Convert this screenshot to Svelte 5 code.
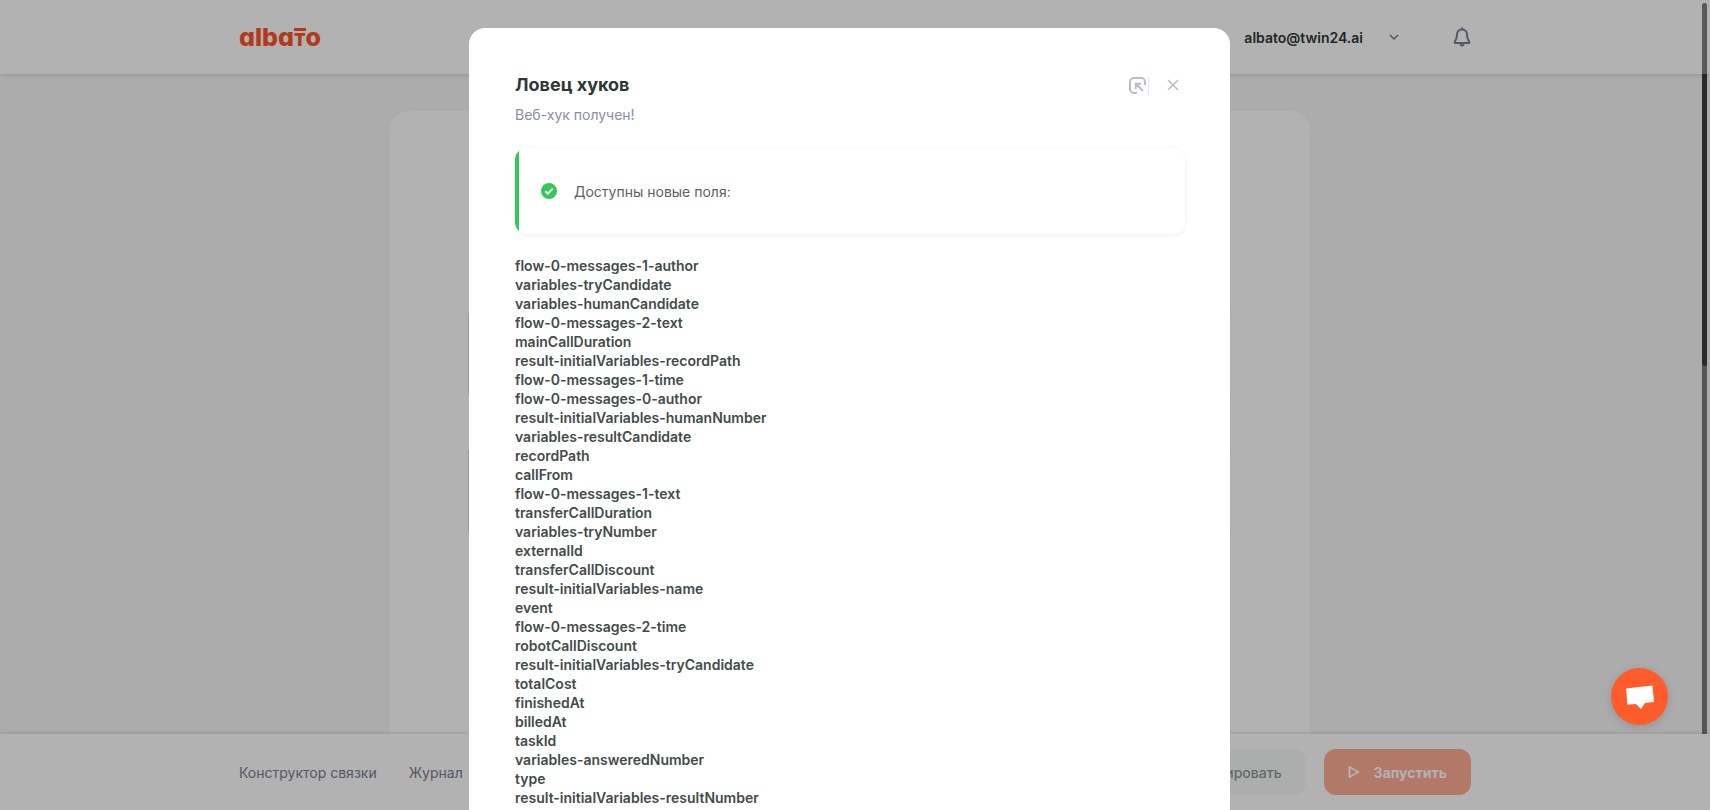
<script>
	let fields = [
		'flow-0-messages-1-author',
		'variables-tryCandidate',
		'variables-humanCandidate',
		'flow-0-messages-2-text',
		'mainCallDuration',
		'result-initialVariables-recordPath',
		'flow-0-messages-1-time',
		'flow-0-messages-0-author',
		'result-initialVariables-humanNumber',
		'variables-resultCandidate',
		'recordPath',
		'callFrom',
		'flow-0-messages-1-text',
		'transferCallDuration',
		'variables-tryNumber',
		'externalId',
		'transferCallDiscount',
		'result-initialVariables-name',
		'event',
		'flow-0-messages-2-time',
		'robotCallDiscount',
		'result-initialVariables-tryCandidate',
		'totalCost',
		'finishedAt',
		'billedAt',
		'taskId',
		'variables-answeredNumber',
		'type',
		'result-initialVariables-resultNumber'
	];
</script>

<div class="page">
	<header class="header">
		<div class="container">
			<a class="logo" href="/" aria-label="albato">alba<span class="logo-t">T</span>o</a>
			<div class="account">
				<button class="user">
					albato@twin24.ai
					<svg width="10" height="6" viewBox="0 0 10 6"><path d="M1 1l4 4 4-4" /></svg>
				</button>
				<button class="bell" aria-label="Уведомления">
					<svg width="18" height="20" viewBox="0 0 18 20">
						<path d="M9 2.5C5.8 2.5 4 4.8 4 7.6c0 4.2-1 5.2-2 6.6-.7 1-.4 1.9.8 1.9h12.4c1.2 0 1.5-.9.8-1.9-1-1.4-2-2.4-2-6.6 0-2.8-1.8-5.1-5-5.1z" />
						<path d="M8 1.5h2M7 17.5q2 2 4 0" />
					</svg>
				</button>
			</div>
		</div>
	</header>

	<main class="main">
		<div class="card">
			<div class="step"></div>
			<div class="step"></div>
		</div>
	</main>

	<footer class="footer">
		<div class="container">
			<nav class="links">
				<a href="#builder">Конструктор связки</a>
				<a href="#log">Журнал</a>
			</nav>
			<div class="actions">
				<button class="btn btn-secondary">Редактировать</button>
				<button class="btn btn-primary">
					<svg width="12" height="14" viewBox="0 0 12 14"><path d="M1.5 2v10L10.5 7z" /></svg>
					Запустить
				</button>
			</div>
		</div>
	</footer>
</div>

<div class="page-thumb"></div>

<div class="overlay">
	<div class="modal" role="dialog" aria-labelledby="modal-title">
		<div class="modal-header">
			<h2 id="modal-title">Ловец хуков</h2>
			<div class="modal-tools">
				<button class="expand" aria-label="Развернуть">
					<svg width="17" height="17" viewBox="0 0 17 17">
						<path d="M8 16H5a4 4 0 0 1-4-4V5a4 4 0 0 1 4-4h7a4 4 0 0 1 4 4v3" />
						<path d="M14 14L7 7M6.8 12V6.8H12" />
					</svg>
				</button>
				<button class="close" aria-label="Закрыть">
					<svg width="12" height="12" viewBox="0 0 12 12"><path d="M1 1l10 10M11 1L1 11" /></svg>
				</button>
			</div>
		</div>
		<p class="subtitle">Веб-хук получен!</p>

		<div class="alert">
			<svg width="16" height="16" viewBox="0 0 16 16">
				<circle cx="8" cy="8" r="8" />
				<path d="M4.3 8.2l2.5 2.4 4.9-5" />
			</svg>
			<span>Доступны новые поля:</span>
		</div>

		<ul class="fields">
			{#each fields as field}
				<li>{field}</li>
			{/each}
		</ul>
	</div>
</div>

<div class="modal-thumb"></div>

<button class="chat" aria-label="Чат">
	<svg width="28" height="24" viewBox="0 0 28 24">
		<path d="M0 3.5L26.5.5 28 17l-9 1-4 6-5-5-8.500.700z" />
	</svg>
</button>

<style>
	:global(body) {
		background: #f6f6f6;
		font-family: Inter, 'Liberation Sans', sans-serif;
		font-size: 14px;
		color: #2d3835;
		overflow: hidden;
	}

	button {
		font: inherit;
		color: inherit;
		background: none;
		border: none;
		padding: 0;
		cursor: pointer;
	}

	a {
		text-decoration: none;
	}

	svg {
		display: block;
		flex: none;
		fill: none;
		stroke: currentColor;
		stroke-width: 2;
	}

	.page {
		height: 100vh;
		display: flex;
		flex-direction: column;
	}

	.header,
	.footer {
		flex: none;
		position: relative;
		background: #fff;
	}

	.header {
		height: 74px;
		box-shadow: 0 1px 5px rgba(20, 50, 45, 0.15);
	}

	.footer {
		height: 76px;
		box-shadow: 0 -1px 4px rgba(0, 0, 0, 0.12);
	}

	.container {
		max-width: 1232px;
		height: 100%;
		margin: 0 auto;
		display: flex;
		align-items: center;
		justify-content: space-between;
	}

	.logo {
		font-size: 25px;
		font-weight: 800;
		line-height: 24px;
		font-feature-settings: 'cv11';
		color: #ff5328;
	}

	.logo-t {
		display: inline-block;
		padding-top: 3px;
		border-top: 3px solid;
		font-size: 17px;
		font-weight: 900;
		line-height: 12px;
	}

	.account,
	.user {
		display: flex;
		align-items: center;
	}

	.account {
		gap: 54px;
	}

	.user {
		gap: 26px;
		font-weight: 600;
	}

	.user svg {
		color: #787d92;
		stroke-width: 1.5;
	}

	.bell {
		color: #787d92;
	}

	.main {
		flex: 1;
		min-height: 0;
		overflow: hidden;
		padding: 37px 10px 0 0;
	}

	.card {
		box-sizing: border-box;
		max-width: 920px;
		height: 100%;
		margin: 0 auto;
		padding: 200px 78px 0;
		border-radius: 20px 20px 0 0;
		background: #fff;
	}

	.step {
		box-sizing: border-box;
		height: 86px;
		margin-bottom: 51px;
		border: 1px solid #dcdcdc;
		border-right-color: #f8faf9;
		border-radius: 4px;
	}

	.links {
		display: flex;
		gap: 32px;
	}

	.links a {
		color: #787d92;
	}

	.actions {
		display: flex;
		gap: 18px;
	}

	.btn {
		height: 46px;
		padding: 0 24px;
		display: flex;
		align-items: center;
		gap: 14px;
		border-radius: 12px;
	}

	.btn-secondary {
		background: #f6faf9;
		color: #8f9593;
		font-weight: 500;
	}

	.btn-primary {
		background: #ffac96;
		color: #fff;
		font-weight: 700;
	}

	.btn svg {
		stroke-linejoin: round;
	}

	.overlay {
		position: fixed;
		inset: 0;
		overflow: hidden;
		padding: 28px 11px 0 0;
		background: rgba(0, 0, 0, 0.3);
	}

	.modal {
		box-sizing: border-box;
		max-width: 761px;
		margin: 0 auto;
		padding: 45px 45px 40px 46px;
		border-radius: 16px;
		background: #fff;
	}

	.modal-header {
		display: flex;
		align-items: center;
		justify-content: space-between;
	}

	h2 {
		margin: 0;
		font-size: 18px;
		line-height: 24px;
		font-weight: 700;
	}

	.modal-tools {
		display: flex;
		align-items: center;
		gap: 18px;
		padding-right: 6px;
		color: #b8bccb;
	}

	.expand {
		padding-right: 2px;
		border-right: 1px solid #e2e4ea;
	}

	.close svg {
		stroke-width: 1.5;
	}

	.subtitle {
		margin: 8px 0 23px;
		line-height: 20px;
		color: #8a8ea3;
	}

	.alert {
		display: flex;
		align-items: center;
		gap: 17px;
		height: 86px;
		padding-left: 26px;
		border-radius: 12px;
		background: linear-gradient(to right, #34c759 4px, #fff 4px);
		box-shadow: 0 1px 4px rgba(0, 0, 0, 0.08);
		color: #5b6461;
	}

	.alert circle {
		fill: #34c759;
		stroke: none;
	}

	.alert path {
		stroke: #fff;
	}

	.fields {
		list-style: none;
		margin: 22px 0 0;
		padding: 0;
		line-height: 19px;
		font-weight: 600;
		color: #424c49;
	}

	.page-thumb,
	.modal-thumb {
		position: fixed;
		right: 3px;
		width: 5px;
		background: rgba(0, 0, 0, 0.5);
	}

	.page-thumb {
		top: 74px;
		height: 36vh;
		border-radius: 0 0 3px 3px;
	}

	.modal-thumb {
		top: 3px;
		bottom: 76px;
		border-radius: 3px 3px 0 0;
	}

	.chat {
		position: fixed;
		right: 42px;
		bottom: 85px;
		width: 57px;
		height: 57px;
		display: flex;
		align-items: center;
		justify-content: center;
		border-radius: 50%;
		background: #ff5c2b;
		box-shadow: 0 2px 8px rgba(0, 0, 0, 0.15);
	}

	.chat svg {
		fill: #fff;
		stroke: none;
	}
</style>
